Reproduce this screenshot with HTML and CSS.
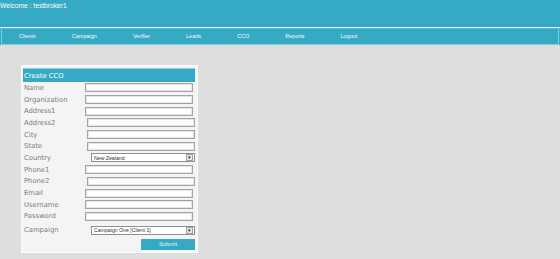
FILE: index.html
```
<!DOCTYPE html>
<html lang="en">
<head>
  <meta charset="UTF-8">
  <title>Create CCO</title>
  <link rel="stylesheet" href="styles.css">
</head>
<body>
  <div class="top">
    <div class="welcome">Welcome : testbroker1</div>
  </div>
  <div class="menu-wrap">
    <ul class="menu">
      <li>Clients</li>
      <li>Campaign</li>
      <li>Verifier</li>
      <li>Leads</li>
      <li>CCO</li>
      <li>Reports</li>
      <li>Logout</li>
    </ul>
  </div>

  <div class="content">
    <div class="panel">
      <div class="panel-title">Create CCO</div>
      <form class="form">
        <div class="row"><label>Name</label><input type="text"></div>
        <div class="row"><label>Organization</label><input type="text"></div>
        <div class="row"><label>Address1</label><input type="text"></div>
        <div class="row"><label>Address2</label><input type="text" class="shift"></div>
        <div class="row"><label>City</label><input type="text" class="shift"></div>
        <div class="row"><label>State</label><input type="text" class="shift"></div>
        <div class="row">
          <label>Country</label>
          <div class="select"><span>New Zealand</span><span class="arrow">&#9662;</span></div>
        </div>
        <div class="row"><label>Phone1</label><input type="text"></div>
        <div class="row"><label>Phone2</label><input type="text" class="shift"></div>
        <div class="row"><label>Email</label><input type="text"></div>
        <div class="row"><label>Username</label><input type="text"></div>
        <div class="row"><label>Password</label><input type="password"></div>
        <div class="row last">
          <label>Campaign</label>
          <div class="select"><span>Campaign One [Client 1]</span><span class="arrow">&#9662;</span></div>
        </div>
        <div class="actions">
          <button type="button">Submit</button>
        </div>
      </form>
    </div>
  </div>
</body>
</html>
```

FILE: styles.css
```
body {
  margin: 0;
  background: #dedede;
  font-family: 'Liberation Sans', Arial, sans-serif;
  width: 560px;
  height: 259px;
  overflow: hidden;
}
.top {
  background: #36a9c5;
  height: 27px;
  border-bottom: 1px solid #f2fafc;
}
.welcome {
  color: #fff;
  font-size: 6.7px;
  line-height: 11px;
}
.menu-wrap {
  background: #36a9c5;
  padding: 0 1px;
}
.menu {
  display: flex;
  margin: 0;
  padding: 0;
  list-style: none;
  height: 15px;
  border: 1px solid #7ccde0;
  border-top-color: #58bbd3;
}
.menu li {
  color: #f4fbfd;
  font-size: 5.5px;
  line-height: 15px;
  padding: 0 18px;
}
.menu li:first-child {
  padding-left: 17px;
}
.content {
  padding: 20px 0 0 21px;
}
.panel {
  width: 172px;
  background: #f4f4f4;
  border: 1px solid #fbfbfb;
  padding: 2px 2px 2px 1px;
  font-family: 'DejaVu Sans', Verdana, sans-serif;
}
.panel-title {
  background: #36a9c5;
  color: #fff;
  font-size: 6.8px;
  height: 14px;
  line-height: 14px;
  padding-left: 1px;
  border-top: 1px solid #8dd0e0;
  box-sizing: border-box;
}
.row {
  display: flex;
  align-items: center;
  height: 11.7px;
}
.row.last {
  margin-top: 2px;
}
.row label {
  width: 61px;
  padding-left: 1px;
  font-size: 6.8px;
  color: #7b7b7b;
}
.row input {
  width: 108px;
  height: 9px;
  box-sizing: border-box;
  margin: 0;
  padding: 0;
  background: #fff;
  border: 1px solid #a4a4a4;
  box-shadow: inset 0 0 0 1px #e4e4e4;
}
.row input.shift {
  margin-left: 2px;
}
.select {
  display: flex;
  align-items: center;
  justify-content: space-between;
  width: 104px;
  height: 9px;
  box-sizing: border-box;
  margin-left: 6px;
  background: #fff;
  border: 1px solid #8f8f8f;
  font-family: 'Liberation Sans', Arial, sans-serif;
  font-size: 5.2px;
  color: #333;
  padding: 0 1px 0 2px;
}
.select .arrow {
  width: 5px;
  height: 5px;
  background: #e6e6e6;
  border: 1px solid #a0a0a0;
  color: #222;
  font-size: 5px;
  line-height: 5px;
  text-align: center;
}
.actions {
  display: flex;
  justify-content: flex-end;
  margin-top: 3px;
}
button {
  width: 54px;
  height: 11px;
  margin: 0;
  padding: 0;
  border: none;
  background: #36a9c5;
  color: #eaf6fa;
  font-family: 'Liberation Sans', Arial, sans-serif;
  font-size: 5.8px;
}
```
